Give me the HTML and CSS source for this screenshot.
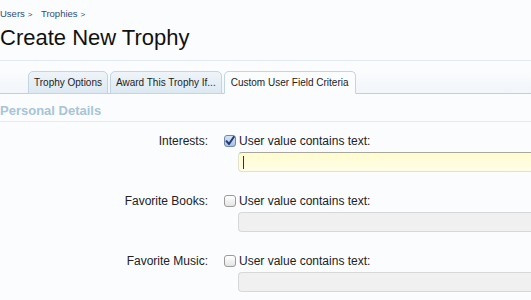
FILE: index.html
```html
<!DOCTYPE html>
<html lang="en">
<head>
    <meta charset="UTF-8">
    <title>Create New Trophy</title>
    <link rel="stylesheet" href="styles.css">
</head>
<body>
    <div class="breadcrumb">
        <a href="#">Users</a><span class="arrow">&gt;</span>
        <a href="#">Trophies</a><span class="arrow">&gt;</span>
    </div>

    <h1 class="title">Create New Trophy</h1>

    <ul class="tabs">
        <li class="tab">Trophy Options</li>
        <li class="tab">Award This Trophy If...</li>
        <li class="tab active">Custom User Field Criteria</li>
    </ul>

    <h3 class="section">Personal Details</h3>

    <!-- user field rows -->
    <div class="ctrl-unit">
        <div class="ctrl-label">Interests:</div>
        <div class="ctrl-body">
            <label class="check">
                <span class="box checked">
                    <svg width="10" height="10" viewBox="0 0 10 10"><path d="M1.5 5.2 L4 8 L8.8 1" fill="none" stroke="#233a6e" stroke-width="2" stroke-linecap="round" stroke-linejoin="round"/></svg>
                </span>
                User value contains text:
            </label>
            <div class="text-input focus"><span class="caret"></span></div>
        </div>
    </div>

    <div class="ctrl-unit">
        <div class="ctrl-label">Favorite Books:</div>
        <div class="ctrl-body">
            <label class="check"><span class="box"></span>User value contains text:</label>
            <div class="text-input"></div>
        </div>
    </div>

    <div class="ctrl-unit">
        <div class="ctrl-label">Favorite Music:</div>
        <div class="ctrl-body">
            <label class="check"><span class="box"></span>User value contains text:</label>
            <div class="text-input"></div>
        </div>
    </div>
</body>
</html>
```

FILE: styles.css
```css
body {
    margin: 0;
    background: #fbfcfe;
    font-family: "Liberation Sans", Arial, sans-serif;
    font-size: 12px;
    color: #222;
    overflow: hidden;
}

.breadcrumb {
    padding-top: 7px;
    height: 15px;
    line-height: 14px;
    font-size: 9.5px;
}

.breadcrumb a {
    color: #2d4d7a;
    text-decoration: none;
}

.breadcrumb .arrow {
    font-size: 8px;
    color: #2d4d7a;
    margin: 0 6px 0 3px;
}

.title {
    margin: 0;
    padding: 3px 0 9px;
    font-size: 22px;
    font-weight: normal;
    line-height: 26px;
    color: #111;
    border-bottom: 1px solid #e2e8ee;
}

.tabs {
    list-style: none;
    margin: 10px 0 0;
    padding: 0 0 0 28px;
    display: flex;
    gap: 2px;
    border-bottom: 1px solid #bcd0df;
    background: linear-gradient(#fbfcfe, #f1f5f9);
}

.tab {
    height: 21px;
    line-height: 21px;
    padding: 0 5px;
    margin-bottom: -1px;
    font-size: 10px;
    color: #222;
    background: linear-gradient(#eef4f9, #dde9f2);
    border: 1px solid #c3d5e2;
    border-radius: 5px 5px 0 0;
}

.tab.active {
    padding: 0 6px;
    background: #fbfcfe;
    border-bottom-color: #fbfcfe;
}

.section {
    margin: 0;
    padding: 9px 0 3px;
    font-size: 13px;
    line-height: 15px;
    color: #a8c4d8;
    border-bottom: 1px solid #e4ebf1;
}

.ctrl-unit {
    display: flex;
    gap: 16px;
    padding-top: 12px;
    height: 48px;
}

.ctrl-label {
    flex-shrink: 0;
    width: 208px;
    text-align: right;
    line-height: 14px;
    color: #222;
}

.ctrl-body {
    flex: 1;
    display: flex;
    flex-direction: column;
}

.check {
    display: flex;
    align-items: center;
    gap: 3px;
    height: 14px;
}

.box {
    width: 10px;
    height: 10px;
    border: 1px solid #9b9b9b;
    border-radius: 3px;
    background: linear-gradient(#ffffff, #e4e4e4);
    display: flex;
    align-items: center;
    justify-content: center;
}

.box.checked {
    border-color: #6f86a8;
    background: linear-gradient(#d6e4f5, #a9c2e4);
}

/* input runs on past the right edge of the window */
.text-input {
    margin: 4px 0 0 14px;
    height: 18px;
    border: 1px solid #d8d8d8;
    border-right: none;
    border-radius: 4px 0 0 4px;
    background: #f0f0f0;
}

.text-input.focus {
    border-color: #e2e2cc;
    border-top-color: #a8a89a;
    background: linear-gradient(#fffcd0, #fffde6);
}

.caret {
    display: block;
    width: 1px;
    height: 13px;
    margin: 3px 0 0 4px;
    background: #333;
}
```
